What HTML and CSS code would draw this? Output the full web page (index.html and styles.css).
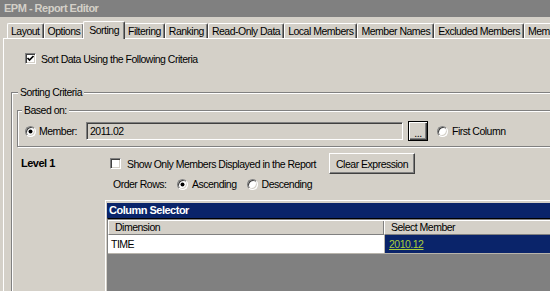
FILE: index.html
```html
<!DOCTYPE html>
<html>
<head>
<meta charset="utf-8">
<title>EPM - Report Editor</title>
<link rel="stylesheet" href="styles.css">
</head>
<body>
<div class="window">
  <div class="titlebar">EPM - Report Editor</div>
  <div class="tabs">
    <div class="tab">Layout</div>
    <div class="tab">Options</div>
    <div class="tab tab-active">Sorting</div>
    <div class="tab">Filtering</div>
    <div class="tab">Ranking</div>
    <div class="tab">Read-Only Data</div>
    <div class="tab">Local Members</div>
    <div class="tab">Member Names</div>
    <div class="tab">Excluded Members</div>
    <div class="tab">Member Formulas</div>
  </div>
  <div class="panel">
    <div class="check-row sort-data">
      <span class="checkbox"><svg class="check-mark" width="9" height="9" viewBox="0 0 9 9"><path d="M1.5 4 L3.5 6 L7.5 2" fill="none" stroke="#000" stroke-width="1.7"/></svg></span>
      <span>Sort Data Using the Following Criteria</span>
    </div>
    <fieldset class="group criteria">
      <legend class="group-title">Sorting Criteria</legend>
      <fieldset class="group based-on">
        <legend class="group-title based-title">Based on:</legend>
        <div class="member-row">
          <span class="radio radio-on"></span>
          <span class="member-label">Member:</span>
          <div class="textbox">2011.02</div>
          <div class="btn btn-default btn-dots">...</div>
          <span class="radio first-radio"></span>
          <span class="radio-text">First Column</span>
        </div>
      </fieldset>
      <div class="level">
        <div class="level-name">Level 1</div>
        <div class="level-body">
          <div class="level-row">
            <span class="checkbox"></span>
            <span class="show-only">Show Only Members Displayed in the Report</span>
            <div class="btn btn-clear">Clear Expression</div>
          </div>
          <div class="order-row">
            <span class="order-label">Order Rows:</span>
            <span class="radio radio-on"></span>
            <span class="radio-text">Ascending</span>
            <span class="radio desc-radio"></span>
            <span class="radio-text">Descending</span>
          </div>
          <div class="colsel">
            <div class="colsel-title">Column Selector</div>
            <div class="grid">
              <div class="grid-head">
                <div class="gh c1">Dimension</div>
                <div class="gh c2">Select Member</div>
              </div>
              <div class="grid-row">
                <div class="gc c1">TIME</div>
                <div class="gc c2 selected"><span class="link">2010.12</span></div>
              </div>
              <div class="grid-empty"></div>
            </div>
          </div>
        </div>
      </div>
    </fieldset>
  </div>
</div>
</body>
</html>
```

FILE: styles.css
```css
* { box-sizing: border-box; }

html, body {
  margin: 0;
  padding: 0;
  width: 550px;
  height: 291px;
  overflow: hidden;
  background: #d4d0c8;
}

body {
  font-family: "Liberation Sans", Arial, sans-serif;
  font-size: 10.5px;
  letter-spacing: -0.5px;
  color: #000;
}

.window {
  width: 640px;
}

.titlebar {
  height: 17px;
  line-height: 17px;
  background: #808080;
  color: #d4d0c8;
  font-weight: bold;
  font-size: 11px;
  padding-left: 4px;
  white-space: nowrap;
}

/* tabs */
.tabs {
  display: flex;
  align-items: flex-end;
  height: 17px;
  margin-top: 4px;
  padding-left: 7px;
  white-space: nowrap;
}

.tab {
  height: 15px;
  line-height: 14px;
  padding: 0 3px;
  border-top: 1px solid #fff;
  border-left: 1px solid #fff;
  border-right: 1px solid #404040;
  box-shadow: inset -1px 0 0 #808080;
  border-radius: 2px 2px 0 0;
}

.tab-active {
  height: 18px;
  line-height: 16px;
  margin: 0 -1px -1px -1px;
  padding: 0 5px;
  position: relative;
  z-index: 1;
  background: #d4d0c8;
}

/* panel */
.panel {
  margin-left: 3px;
  border-top: 1px solid #fff;
  border-left: 1px solid #fff;
}

.check-row {
  display: flex;
  align-items: center;
  height: 13px;
}

.sort-data {
  margin-top: 13px;
  padding-left: 21px;
}

.checkbox {
  width: 11px;
  height: 11px;
  flex: none;
  background: #fff;
  border: 1px solid;
  border-color: #808080 #fff #fff #808080;
  box-shadow: inset 1px 1px 0 #404040, inset -1px -1px 0 #d4d0c8;
  display: inline-flex;
  align-items: center;
  justify-content: center;
  margin-right: 5px;
}

.check-mark { display: block; }

/* group boxes */
.group {
  margin: 0;
  min-width: 0;
  border: 1px solid #808080;
  box-shadow: inset 1px 1px 0 #fff, 1px 1px 0 #fff;
}

.group-title {
  background: #d4d0c8;
  line-height: 13px;
  padding: 0 2px;
  margin-left: 1px;
}

.criteria {
  margin-top: 21px;
  margin-left: 7px;
  padding: 0 0 0 5px;
}

.based-on {
  margin-top: 5px;
  padding: 4px 0 5px 7px;
}

.based-title {
  margin-left: -3px;
}

.member-row {
  display: flex;
  align-items: center;
  height: 20px;
}

.radio {
  width: 11px;
  height: 11px;
  flex: none;
  border-radius: 50%;
  background: #fff;
  border: 1px solid;
  border-color: #808080 #fff #fff #808080;
  box-shadow: inset 1px 1px 0 #404040, inset -1px -1px 0 #d4d0c8;
  display: inline-flex;
  align-items: center;
  justify-content: center;
}

.radio-on::after {
  content: "";
  width: 3px;
  height: 3px;
  border-radius: 50%;
  background: #000;
  box-shadow: 0 0 0 0.5px #000;
}

.member-label {
  margin-left: 3px;
  width: 47px;
}

.textbox {
  width: 317px;
  height: 18px;
  line-height: 16px;
  padding-left: 3px;
  border: 1px solid;
  border-color: #808080 #fff #fff #808080;
  box-shadow: inset 1px 1px 0 #404040, inset -1px -1px 0 #d4d0c8;
  background: #d4d0c8;
}

.btn {
  background: #d4d0c8;
  border: 1px solid;
  border-color: #fff #404040 #404040 #fff;
  box-shadow: inset -1px -1px 0 #808080;
  display: flex;
  align-items: center;
  justify-content: center;
}

.btn-default {
  border: 1px solid #000;
  box-shadow: inset 1px 1px 0 #fff, inset -1px -1px 0 #404040, inset -2px -2px 0 #808080;
}

.btn-dots {
  width: 20px;
  height: 20px;
  margin-left: 5px;
  padding-top: 3px;
}

.first-radio {
  margin-left: 9px;
}

.radio-text {
  margin-left: 4px;
}

/* level */
.level {
  display: flex;
  margin-top: 6px;
}

.level-name {
  width: 89px;
  margin-left: 4px;
  height: 21px;
  line-height: 21px;
  font-weight: bold;
  font-size: 11px;
  flex: none;
}

.level-body {
  flex: 1;
}

.level-row {
  display: flex;
  align-items: center;
  height: 21px;
}

.show-only {
  margin-left: 1px;
}

.btn-clear {
  width: 86px;
  height: 21px;
  margin-left: 13px;
}

.order-row {
  display: flex;
  align-items: center;
  height: 16px;
  margin-top: 2px;
  padding-left: 3px;
}

.order-label {
  width: 64px;
}

.desc-radio {
  margin-left: 10px;
}

/* column selector */
.colsel {
  margin-top: 8px;
  margin-left: -5px;
  border-top: 1px solid #fff;
  border-left: 1px solid #fff;
  padding: 2px 0 0 1px;
  background: #d4d0c8;
}

.colsel-title {
  height: 15px;
  line-height: 15px;
  background: #0a246a;
  color: #fff;
  font-weight: bold;
  font-size: 11px;
  padding-left: 2px;
}

.grid {
  border-top: 1px solid #000;
  border-left: 1px solid #808080;
  padding-top: 1px;
  background: #808080;
}

.grid-head {
  display: flex;
  height: 15px;
  background: #d4d0c8;
  border-top: 1px solid #fff;
}

.gh {
  line-height: 13px;
  border-left: 1px solid #fff;
  border-right: 1px solid #808080;
  border-bottom: 1px solid #808080;
  padding-left: 6px;
}

.c1 { width: 276px; flex: none; }
.c2 { flex: 1; }

.grid-row {
  display: flex;
  height: 19px;
  border-bottom: 1px solid #b8b4ac;
}

.gc {
  line-height: 18px;
  padding-left: 3px;
  background: #fff;
}

.gc.c2 {
  border-left: 1px solid #b8b4ac;
}

.selected {
  background: #0a246a;
  padding-left: 4px;
}

.link {
  color: #a8cc3a;
  text-decoration: underline;
}

.grid-empty {
  height: 60px;
  background: #808080;
}
```
